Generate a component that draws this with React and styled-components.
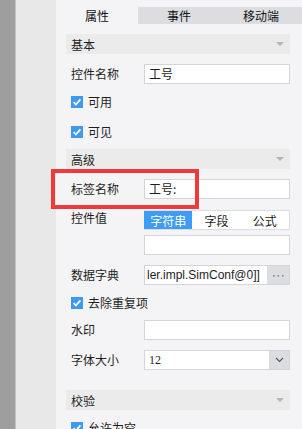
import React from 'react';
import styled, { createGlobalStyle } from 'styled-components';

const GlobalStyle = createGlobalStyle`
  html, body {
    margin: 0;
    padding: 0;
  }
  body {
    width: 302px;
    height: 429px;
    overflow: hidden;
    font-family: "Noto Sans CJK SC", "Liberation Sans", sans-serif;
    font-size: 12px;
    color: #1e1e1e;
  }
`;

const Check = () => (
  <CheckBox>
    <svg width="12" height="12" viewBox="0 0 12 12">
      <path d="M2.6 6.2 L4.9 8.6 L9.4 3.4" fill="none" stroke="#fff" strokeWidth="1.7" />
    </svg>
  </CheckBox>
);

const Chevron = () => (
  <svg width="9" height="6" viewBox="0 0 9 6">
    <path d="M1 1 L4.5 4.5 L8 1" fill="none" stroke="#555" strokeWidth="1.1" />
  </svg>
);

const Dots = () => (
  <svg width="11" height="3" viewBox="0 0 11 3">
    <rect x="0" y="1" width="1.6" height="1.6" fill="#8a8a8a" />
    <rect x="4.5" y="1" width="1.6" height="1.6" fill="#8a8a8a" />
    <rect x="9" y="1" width="1.6" height="1.6" fill="#8a8a8a" />
  </svg>
);

const App = () => {
  return (
    <Screen>
      <GlobalStyle />
      <Rail />
      <Sidebar />
      <Panel>
        <Tabs>
          <Tab active>属性</Tab>
          <Tab>事件</Tab>
          <Tab>移动端</Tab>
        </Tabs>
        <Body>
          <SectionHeader gap={10}>
            基本
            <Caret />
          </SectionHeader>
          <Field gap={10}>
            <Label>控件名称</Label>
            <TextBox>工号</TextBox>
          </Field>
          <CheckRow>
            <Check />
            可用
          </CheckRow>
          <CheckRow gap={0}>
            <Check />
            可见
          </CheckRow>

          <SectionHeader gap={5}>
            高级
            <Caret />
          </SectionHeader>
          <Field gap={10}>
            {/* annotation frame drawn over the row */}
            <Highlight />
            <Label>标签名称</Label>
            <TextBox>工号:</TextBox>
          </Field>
          <Field gap={11}>
            <Label tight>控件值</Label>
            <Stack>
              <Segmented>
                <Segment active>字符串</Segment>
                <Segment>字段</Segment>
                <Segment>公式</Segment>
              </Segmented>
              <TextBox />
            </Stack>
          </Field>
          <Field gap={10}>
            <Label>数据字典</Label>
            <Combo>
              <ComboText latin>ler.impl.SimConf@0]]</ComboText>
              <ComboButton>
                <Dots />
              </ComboButton>
            </Combo>
          </Field>
          <CheckRow>
            <Check />
            去除重复项
          </CheckRow>
          <Field gap={5}>
            <Label>水印</Label>
            <TextBox />
          </Field>
          <Field gap={10}>
            <Label>字体大小</Label>
            <Combo>
              <ComboText serif>12</ComboText>
              <ComboButton narrow>
                <Chevron />
              </ComboButton>
            </Combo>
          </Field>

          <SectionHeader gap={20}>
            校验
            <Caret />
          </SectionHeader>
          <CheckRow>
            <Check />
            允许为空
          </CheckRow>
        </Body>
      </Panel>
    </Screen>
  );
};

export default App;

const Screen = styled.div`
  display: flex;
  width: 302px;
  height: 429px;
  overflow: hidden;
`;

const Rail = styled.div`
  width: 15px;
  flex-shrink: 0;
  background: #9e9e9e;
`;

const Sidebar = styled.div`
  width: 40px;
  flex-shrink: 0;
  background: #e8e8e8;
  border-left: 1px solid #c2c2c2;
`;

const Panel = styled.div`
  flex: 1;
  display: flex;
  flex-direction: column;
  background: #f4f4f6;
  padding-top: 7px;
`;

const Tabs = styled.div`
  display: grid;
  grid-template-columns: repeat(3, 1fr);
  height: 24px;
`;

const Tab = styled.div`
  display: flex;
  align-items: center;
  justify-content: center;
  font-size: 12px;
  color: #111;
  background: ${(p) => (p.active ? '#f4f4f6' : '#dcdde0')};
`;

const Body = styled.div`
  padding: 0 12px 0 10px;
`;

const SectionHeader = styled.div`
  margin-top: ${(p) => p.gap}px;
  height: 20px;
  display: flex;
  align-items: center;
  justify-content: space-between;
  padding: 0 6px 0 5px;
  background: #ebebeb;
`;

const Caret = styled.span`
  width: 0;
  height: 0;
  border-left: 4px solid transparent;
  border-right: 4px solid transparent;
  border-top: 4px solid #b5b5b5;
`;

const Field = styled.div`
  position: relative;
  display: grid;
  grid-template-columns: 78px 1fr;
  align-items: start;
  margin-top: ${(p) => p.gap}px;
`;

const Label = styled.div`
  padding-left: 5px;
  line-height: ${(p) => (p.tight ? '16px' : '20px')};
`;

const TextBox = styled.div`
  height: 20px;
  box-sizing: border-box;
  border: 1px solid #d3d5d9;
  background: #fff;
  padding: 0 4px;
  line-height: 18px;
  white-space: nowrap;
  overflow: hidden;
`;

const Highlight = styled.div`
  position: absolute;
  left: -15px;
  top: -10px;
  width: 148px;
  height: 40px;
  box-sizing: border-box;
  border: 4px solid #ef3a3a;
  pointer-events: none;
`;

const Stack = styled.div`
  display: flex;
  flex-direction: column;
  gap: 5px;
`;

const Segmented = styled.div`
  display: grid;
  grid-template-columns: repeat(3, 1fr);
  height: 20px;
  box-sizing: border-box;
  border: 1px solid #dcdde0;
  border-left: none;
  background: #fff;
`;

const Segment = styled.div`
  display: flex;
  align-items: center;
  justify-content: center;
  background: ${(p) => (p.active ? '#3f9cf4' : 'transparent')};
  color: ${(p) => (p.active ? '#fff' : '#1e1e1e')};
`;

const Combo = styled.div`
  display: flex;
  height: 20px;
  box-sizing: border-box;
  border: 1px solid #d3d5d9;
  background: #fff;
`;

const ComboText = styled.div`
  flex: 1;
  min-width: 0;
  padding-left: ${(p) => (p.latin ? '2px' : '4px')};
  line-height: 18px;
  white-space: nowrap;
  overflow: hidden;
  font-family: ${(p) =>
    p.serif ? '"Liberation Serif", serif' : '"Liberation Sans", Arial, sans-serif'};
  font-size: 12px;
`;

const ComboButton = styled.div`
  width: ${(p) => (p.narrow ? '20px' : '22px')};
  display: flex;
  align-items: center;
  justify-content: center;
  background: #dcdde0;
`;

const CheckRow = styled.div`
  display: flex;
  align-items: center;
  gap: 5px;
  height: 25px;
  padding-left: 5px;
  margin-top: 5px;
`;

const CheckBox = styled.span`
  width: 12px;
  height: 12px;
  display: inline-flex;
  background: #3d9af2;
`;
